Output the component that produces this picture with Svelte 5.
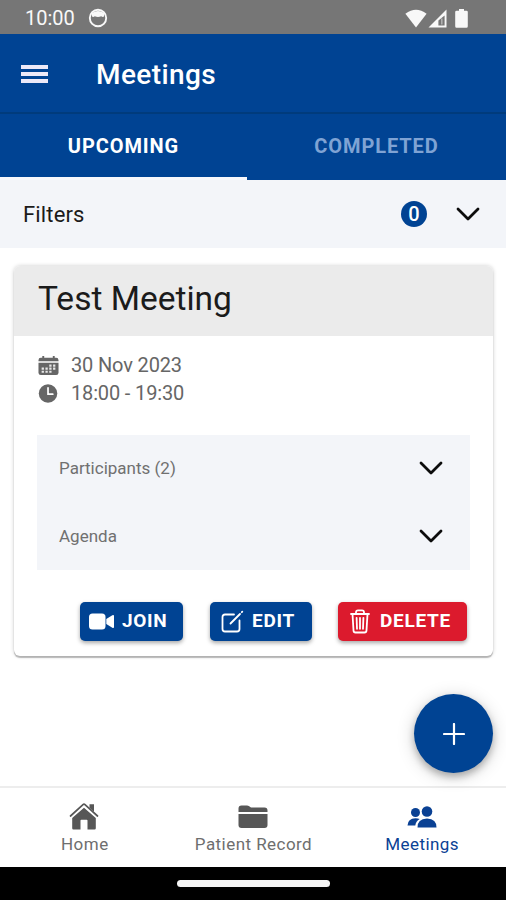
<script lang="ts">
  type TabId = 'upcoming' | 'completed';

  const tabs: { id: TabId; label: string }[] = [
    { id: 'upcoming', label: 'Upcoming' },
    { id: 'completed', label: 'Completed' },
  ];

  const navItems = [
    { id: 'home', label: 'Home' },
    { id: 'record', label: 'Patient Record' },
    { id: 'meetings', label: 'Meetings' },
  ];

  const meeting = {
    title: 'Test Meeting',
    date: '30 Nov 2023',
    time: '18:00 - 19:30',
    sections: ['Participants (2)', 'Agenda'],
  };

  let activeTab = $state<TabId>('upcoming');
  let activeNav = $state('meetings');
  let filterCount = $state(0);
</script>

{#snippet chevron()}
  <svg class="chevron" viewBox="0 0 24 14" aria-hidden="true">
    <path d="M2 2l10 10L22 2" />
  </svg>
{/snippet}

<div class="screen">
  <div class="status">
    <span class="clock">10:00</span>
    <svg class="status-face" viewBox="0 0 20 20" aria-hidden="true">
      <circle cx="10" cy="10" r="8.2" fill="none" stroke="currentColor" stroke-width="1.9" />
      <path d="M3.5 5.2Q10 1 16.5 5.2L16 8.6Q14.6 9.4 13.2 8.2Q10 9.8 6.8 8.2Q5.4 9.6 4 8.6Z" fill="currentColor" />
    </svg>
    <div class="status-right">
      <svg width="22" height="19" viewBox="0 0 22 19" aria-hidden="true">
        <path d="M0.4 4.8Q11-3.4 21.6 4.8L11 18.4Z" fill="currentColor" />
      </svg>
      <svg width="19" height="19" viewBox="0 0 19 19" aria-hidden="true">
        <path d="M18.5 0.5V18.5H0.5Z M16.6 6.5L10.4 11.5V16.6H16.6Z" fill="currentColor" fill-rule="evenodd" />
        <path d="M13.8 9.6V15.6" stroke="currentColor" stroke-width="1.6" opacity="0.45" />
      </svg>
      <svg class="battery" width="13" height="19" viewBox="0 0 13 19" aria-hidden="true">
        <path d="M4 0h5v1.7h2.4q1.4 0 1.4 1.4v14.2q0 1.5-1.4 1.5H1.6q-1.4 0-1.4-1.5V3.1q0-1.4 1.4-1.4H4z" fill="currentColor" />
      </svg>
    </div>
  </div>

  <header class="toolbar">
    <button class="menu" aria-label="Menu">
      <span></span>
      <span></span>
      <span></span>
    </button>
    <h1>Meetings</h1>
  </header>

  <div class="tabs" role="tablist">
    {#each tabs as tab}
      <button
        class="tab"
        role="tab"
        aria-selected={activeTab === tab.id}
        onclick={() => (activeTab = tab.id)}
      >
        {tab.label}
      </button>
    {/each}
  </div>

  <div class="filters">
    <span class="filters-label">Filters</span>
    <span class="badge">{filterCount}</span>
    {@render chevron()}
  </div>

  <main>
    <article class="card">
      <h2>{meeting.title}</h2>
      <div class="card-body">
        <p class="meta">
          <svg viewBox="0 0 22 22" aria-hidden="true">
            <path d="M4.5 1h2v2h9V1h2v2H19q2.5 0 2.5 2.4V6.6H.5V5.4Q.5 3 3 3h1.5z" fill="currentColor" />
            <path d="M.5 8h21v10.600q0 2.400-2.500 2.400H3Q.5 21 .5 18.600z" fill="currentColor" />
            <g fill="#fff" opacity="0.85">
              <path d="M11.800 10h2.400v2.200h-2.400zM15.800 10h2.400v2.200h-2.400z" />
              <path d="M3.800 13.200h2.400v2.200H3.800zM7.800 13.200h2.400v2.200H7.800zM11.800 13.200h2.400v2.200h-2.400zM15.800 13.200h2.400v2.200h-2.400z" />
              <path d="M3.800 16.400h2.400v2.200H3.800zM7.800 16.400h2.400v2.200H7.800zM11.800 16.400h2.400v2.200h-2.400z" />
            </g>
          </svg>
          {meeting.date}
        </p>
        <p class="meta">
          <svg viewBox="0 0 22 22" aria-hidden="true">
            <circle cx="10.500" cy="11" r="9.700" fill="currentColor" />
            <path d="M10.500 5v6.700h5" fill="none" stroke="#fff" stroke-width="1.800" stroke-linecap="round" />
          </svg>
          {meeting.time}
        </p>

        <div class="sections">
          {#each meeting.sections as section}
            <div class="section">
              <span>{section}</span>
              {@render chevron()}
            </div>
          {/each}
        </div>

        <div class="actions">
          <button class="action join">
            <svg width="26" height="18" viewBox="0 0 26 18" aria-hidden="true">
              <rect x="0" y="0.500" width="16.500" height="16" rx="3.500" fill="currentColor" />
              <path d="M17.300 5.900L23.300 2.300Q25 1.500 25 3.100V13.900Q25 15.500 23.300 14.700L17.300 11.100Z" fill="currentColor" />
            </svg>
            <span>Join</span>
          </button>
          <button class="action edit">
            <svg width="23" height="23" viewBox="0 0 23 23" aria-hidden="true">
              <g fill="none" stroke="currentColor" stroke-width="1.800" stroke-linecap="round" stroke-linejoin="round">
                <path d="M13 4.500H4Q1.500 4.500 1.500 7V19Q1.500 21.500 4 21.500H16Q18.500 21.500 18.500 19V10.500" />
                <path d="M9.500 13.500L19 4M20.800 2.200l.5-.5" />
              </g>
            </svg>
            <span>Edit</span>
          </button>
          <button class="action delete">
            <svg width="20" height="25" viewBox="0 0 20 25" aria-hidden="true">
              <g fill="none" stroke="currentColor" stroke-width="1.800" stroke-linecap="round" stroke-linejoin="round">
                <path d="M1 5h18M6 5V3.300Q6 1.300 8 1.300h4q2 0 2 2V5" />
                <path d="M2.500 5l1 16.500q.1 2 2 2h9q1.900 0 2-2L17.500 5M10 8.800v11M6.600 8.800l.4 11M13.400 8.800l-.4 11" />
              </g>
            </svg>
            <span>Delete</span>
          </button>
        </div>
      </div>
    </article>

    <button class="fab" aria-label="Add meeting">
      <svg viewBox="0 0 22 22" aria-hidden="true">
        <path d="M11 1v20M1 11h20" />
      </svg>
    </button>
  </main>

  <nav class="bottom-nav">
    {#each navItems as item}
      <button
        class="nav-item"
        class:active={activeNav === item.id}
        onclick={() => (activeNav = item.id)}
      >
        <svg viewBox="0 0 30 28" aria-hidden="true" fill="currentColor">
          {#if item.id === 'home'}
            <path d="M20.500 2.200h4.500v7.500l-4.500-3.900z" />
            <path d="M15 5.800L26.800 16V26.300q0 1.200-1.200 1.200H18.500V18.600q0-.8-.8-.8h-5.400q-.8 0-.8.8v8.900H4.400q-1.200 0-1.200-1.200V16z" />
            <path d="M1.500 14L14 2.600q1-.9 2 0L28.500 14" fill="none" stroke="currentColor" stroke-width="1.700" stroke-linecap="round" />
          {:else if item.id === 'record'}
            <path d="M.5 10V6.500Q.5 3.500 3.500 3.500H9q1.200 0 2.200.7L13 5.500h13.500q3 0 3 3V10z" />
            <path d="M.5 12h29v11q0 3-3 3h-23q-3 0-3-3z" />
          {:else}
            <circle cx="8.500" cy="10.500" r="4.500" />
            <circle cx="20" cy="9.500" r="5.300" />
            <path d="M.5 23.500Q.8 16.500 8.500 16.300q2.400 0 4.200.8Q8.800 19.200 8.300 23.500z" />
            <path d="M10.500 25.600Q10.300 17 20 16.500q9.700.5 9.500 9.100z" />
          {/if}
        </svg>
        <span>{item.label}</span>
      </button>
    {/each}
  </nav>

  <div class="gesture-bar"><span></span></div>
</div>

<style>
  :global(body) {
    margin: 0;
    background: #fff;
  }

  .screen {
    --primary: #004393;
    --light: #f3f5f9;
    --medium: #666;
    display: flex;
    flex-direction: column;
    width: 506px;
    height: 900px;
    overflow: hidden;
    background: #fff;
    font-family: Roboto, sans-serif;
    color: #1b1b1b;
  }

  button {
    padding: 0;
    border: 0;
    background: none;
    color: inherit;
    font: inherit;
  }

  svg {
    display: block;
    flex: none;
  }

  h1,
  h2,
  p {
    margin: 0;
  }

  .status {
    display: flex;
    align-items: center;
    box-sizing: border-box;
    height: 34px;
    padding: 2px 38px 0 25px;
    background: #767676;
    color: #f8f8f8;
  }

  .clock {
    width: 63px;
    font-size: 20px;
  }

  .status-face {
    width: 20px;
    height: 20px;
  }

  .status-right {
    display: flex;
    gap: 1px;
    margin-left: auto;
  }

  .battery {
    margin-left: 7px;
  }

  .toolbar {
    display: flex;
    align-items: center;
    box-sizing: border-box;
    height: 80px;
    padding: 2px 0 0 21px;
    border-bottom: 2px solid #003b7c;
    background: var(--primary);
    color: #fff;
  }

  .menu {
    display: grid;
    gap: 3px;
    width: 27px;
    margin-right: 48px;
  }

  .menu span {
    height: 4px;
    background: #ece9f8;
  }

  h1 {
    font-size: 28px;
    font-weight: 500;
    letter-spacing: 0.4px;
  }

  .tabs {
    display: grid;
    grid-template-columns: 247px 1fr;
    height: 66px;
    background: var(--primary);
  }

  .tab {
    border-bottom: 3px solid transparent;
    color: #7fa3d4;
    font-size: 20px;
    font-weight: 700;
    letter-spacing: 0.9px;
    text-transform: uppercase;
  }

  .tab[aria-selected='true'] {
    border-color: #f8f8fc;
    color: #fff;
  }

  .filters {
    display: flex;
    align-items: center;
    box-sizing: border-box;
    height: 68px;
    padding: 0 27px 0 23px;
    background: var(--light);
  }

  .filters-label {
    flex: 1;
    font-size: 22px;
    letter-spacing: 0.15px;
  }

  .badge {
    display: grid;
    place-items: center;
    width: 26px;
    height: 26px;
    margin-right: 29px;
    border-radius: 50%;
    background: var(--primary);
    color: #fff;
    font-size: 20px;
    font-weight: 500;
  }

  .chevron {
    width: 24px;
    height: 14px;
    fill: none;
    stroke: #0c0c0c;
    stroke-width: 2.8;
    stroke-linecap: round;
    stroke-linejoin: round;
  }

  .filters .chevron {
    margin-right: -1px;
  }

  main {
    position: relative;
    flex: 1;
    padding: 18px 13px 0 14px;
  }

  .card {
    box-sizing: border-box;
    height: 390px;
    overflow: hidden;
    border-radius: 6px;
    box-shadow:
      0 2px 1px rgba(0, 0, 0, 0.24),
      0 0 4px rgba(0, 0, 0, 0.2);
  }

  h2 {
    box-sizing: border-box;
    height: 70px;
    padding-left: 24px;
    background: #ebebeb;
    font-size: 33.5px;
    font-weight: 400;
    line-height: 66px;
  }

  .card-body {
    padding: 15px 23px 0 24px;
  }

  .meta {
    display: flex;
    align-items: center;
    gap: 12px;
    height: 28px;
    color: var(--medium);
    font-size: 20px;
    letter-spacing: -0.15px;
  }

  .meta svg {
    width: 21px;
    height: 21px;
  }

  .sections {
    margin: 28px 0 0 -1px;
    background: var(--light);
  }

  .section {
    display: flex;
    align-items: center;
    justify-content: space-between;
    box-sizing: border-box;
    height: 67.5px;
    padding: 0 27px 1px 22px;
    color: #707070;
    font-size: 17px;
  }

  .actions {
    display: flex;
    justify-content: flex-end;
    padding: 32px 3px 0 0;
  }

  .action {
    display: flex;
    align-items: center;
    box-sizing: border-box;
    height: 39px;
    border-radius: 5px;
    background: var(--primary);
    box-shadow: 0 2px 4px rgba(0, 0, 0, 0.35);
    color: #fff;
    font-size: 19px;
    font-weight: 700;
    letter-spacing: 0.7px;
    text-transform: uppercase;
  }

  .action span {
    padding-bottom: 2px;
  }

  .join {
    gap: 7px;
    width: 103px;
    padding-left: 9px;
  }

  .edit {
    gap: 8px;
    width: 102px;
    margin: 0 26px 0 27px;
    padding-left: 11px;
  }

  .delete {
    gap: 10px;
    width: 129px;
    padding-left: 12px;
    background: #dc1a2d;
  }

  .fab {
    position: absolute;
    right: 13px;
    bottom: 13px;
    display: grid;
    place-items: center;
    width: 79px;
    height: 79px;
    border-radius: 50%;
    background: var(--primary);
    box-shadow:
      0 4px 7px rgba(0, 0, 0, 0.25),
      0 3px 18px rgba(0, 0, 0, 0.18);
  }

  .fab svg {
    width: 22px;
    height: 22px;
    fill: none;
    stroke: #fff;
    stroke-width: 2.2;
    stroke-linecap: round;
  }

  .bottom-nav {
    display: grid;
    grid-template-columns: repeat(3, 1fr);
    box-sizing: border-box;
    height: 81px;
    border-top: 2px solid #ededed;
    background: #fff;
  }

  .nav-item {
    display: flex;
    flex-direction: column;
    align-items: center;
    padding-top: 14px;
    color: #6e6e6e;
    font-size: 17px;
    line-height: 22px;
    letter-spacing: 0.45px;
  }

  .nav-item span {
    padding-left: 1px;
  }

  .nav-item svg {
    width: 30px;
    height: 28px;
    margin-bottom: 3px;
    color: #575757;
  }

  .nav-item.active,
  .nav-item.active svg {
    color: #0a4194;
  }

  .gesture-bar {
    display: grid;
    place-items: center;
    height: 33px;
    background: #000;
  }

  .gesture-bar span {
    width: 153px;
    height: 7px;
    border-radius: 4px;
    background: #f5f5f5;
  }
</style>
